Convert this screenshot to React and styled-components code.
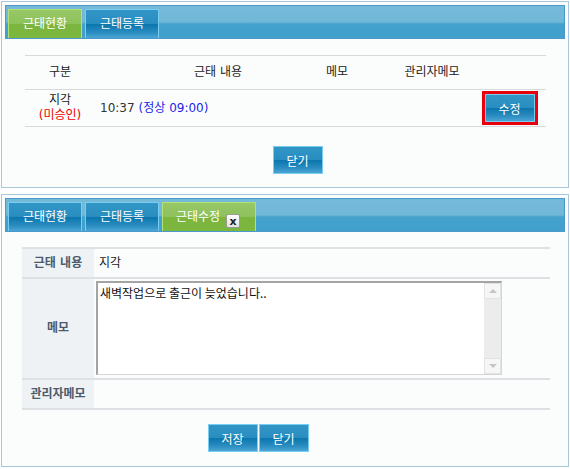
import React from 'react';
import styled, { createGlobalStyle, css } from 'styled-components';

const GlobalStyle = createGlobalStyle`
  body {
    margin: 0;
    background: #fff;
    font-family: "DejaVu Sans", "Noto Sans CJK KR", sans-serif;
    font-size: 12px;
    line-height: 15px;
    color: #222;
  }
`;

const blueGloss = css`
  border: 1px solid #78cdf0;
  background: linear-gradient(180deg, #3196c6 0%, #2a8dc0 48%, #0b77ae 52%, #2a8cc0 80%, #4aa5d3 100%);
`;

const greenGloss = css`
  border: 1px solid #b4e078;
  background: linear-gradient(180deg, #96c866 0%, #8ec25c 48%, #7bb53e 52%, #7cb73f 100%);
`;

const App = () => {
  return (
    <>
      <GlobalStyle />
      <Page>
        <Panel>
          <TabBar>
            <Tab $active>근태현황</Tab>
            <Tab>근태등록</Tab>
          </TabBar>
          <Body $pad="16px 19px 10px 20px">
            <ListTable>
              <HeadRow>
                <HeadCell>구분</HeadCell>
                <HeadCell $shift={58}>근태 내용</HeadCell>
                <HeadCell>메모</HeadCell>
                <HeadCell>관리자메모</HeadCell>
                <HeadCell />
              </HeadRow>
              <DataRow>
                <KindCell>
                  <span>지각</span>
                  <Pending>(미승인)</Pending>
                </KindCell>
                <TimeCell>
                  10:37 <Normal>(정상 09:00)</Normal>
                </TimeCell>
                <div />
                <div />
                <ActionCell>
                  <Highlight>
                    <BlueButton>수정</BlueButton>
                  </Highlight>
                </ActionCell>
              </DataRow>
            </ListTable>
            <ButtonRow $left={24} $top={19}>
              <BlueButton>닫기</BlueButton>
            </ButtonRow>
          </Body>
        </Panel>

        <Panel>
          <TabBar>
            <Tab>근태현황</Tab>
            <Tab>근태등록</Tab>
            <Tab $active $wide>
              근태수정
              <CloseBox>x</CloseBox>
            </Tab>
          </TabBar>
          <Body $pad="15px 15px 11px 17px">
            <FormTable>
              <FormRow $height={28}>
                <Label>근태 내용</Label>
                <Value>지각</Value>
              </FormRow>
              <FormRow $height={99}>
                <Label>메모</Label>
                <MemoWrap>
                  <Memo defaultValue="새벽작업으로 출근이 늦었습니다.." />
                  <ScrollTrack>
                    <ScrollBtn $dir="up" />
                    <ScrollBtn $dir="down" />
                  </ScrollTrack>
                </MemoWrap>
              </FormRow>
              <FormRow $height={28}>
                <Label>관리자메모</Label>
                <Value />
              </FormRow>
            </FormTable>
            <ButtonRow $right={56} $top={14}>
              <BlueButton>저장</BlueButton>
              <BlueButton>닫기</BlueButton>
            </ButtonRow>
          </Body>
        </Panel>
      </Page>
    </>
  );
};

export default App;

const Page = styled.div`
  display: flex;
  flex-direction: column;
  gap: 6px;
  padding: 1px 0 0 1px;
`;

const Panel = styled.section`
  width: 568px;
  box-sizing: border-box;
  border: 1px solid #a9c7db;
  background: #fbfdfd;
  padding: 3px;
`;

const TabBar = styled.div`
  height: 34px;
  box-sizing: border-box;
  border: 1px solid #4b99cc;
  background: linear-gradient(180deg, #75bad9 0%, #71b7d8 50%, #44a2cd 56%, #41a0cc 100%);
  display: flex;
  align-items: flex-end;
  gap: 3px;
  padding: 3px 0 0 2px;
`;

const Tab = styled.div`
  width: ${p => (p.$wide ? 94 : 74)}px;
  height: 29px;
  box-sizing: border-box;
  display: flex;
  align-items: center;
  justify-content: ${p => (p.$wide ? 'flex-start' : 'center')};
  padding-left: ${p => (p.$wide ? 13 : 0)}px;
  color: #fff;
  font-size: 12px;
  ${p => (p.$active ? greenGloss : blueGloss)}
  border-bottom: none;
`;

const CloseBox = styled.span`
  width: 14px;
  height: 14px;
  box-sizing: border-box;
  margin: 8px 0 0 6px;
  border: 1px solid #9a9a9a;
  border-radius: 2px;
  background: linear-gradient(180deg, #ffffff 0%, #e4e4e4 100%);
  color: #222;
  font-size: 11px;
  font-weight: bold;
  line-height: 11px;
  display: flex;
  align-items: center;
  justify-content: center;
`;

const Body = styled.div`
  padding: ${p => p.$pad};
`;

const ListTable = styled.div`
  border-top: 1px solid #d7dadd;
`;

const gridCols = css`
  display: grid;
  grid-template-columns: 70px 188px 108px 82px 1fr;
  border-bottom: 1px solid #d7dadd;
`;

const HeadRow = styled.div`
  ${gridCols}
  height: 34px;
  box-sizing: border-box;
`;

const HeadCell = styled.div`
  display: flex;
  align-items: center;
  justify-content: center;
  padding-left: ${p => p.$shift || 0}px;
  color: #222;
`;

const DataRow = styled.div`
  ${gridCols}
  height: 37px;
  box-sizing: border-box;
`;

const KindCell = styled.div`
  display: flex;
  flex-direction: column;
  align-items: center;
  justify-content: center;
  line-height: 15px;
`;

const Pending = styled.span`
  color: #f00000;
`;

const TimeCell = styled.div`
  display: flex;
  align-items: center;
  gap: 4px;
  padding-left: 5px;
  color: #333;
`;

const Normal = styled.span`
  color: #1d1de8;
`;

const ActionCell = styled.div`
  display: flex;
  align-items: center;
  justify-content: center;
`;

const Highlight = styled.div`
  display: flex;
  border: 3px solid #e8000b;
`;

const BlueButton = styled.button`
  width: 50px;
  height: 28px;
  box-sizing: border-box;
  padding: 0;
  ${blueGloss}
  color: #fff;
  font-family: "DejaVu Sans", "Noto Sans CJK KR", sans-serif;
  font-size: 12px;
  cursor: pointer;
`;

const ButtonRow = styled.div`
  display: flex;
  justify-content: center;
  gap: 1px;
  margin-top: ${p => p.$top}px;
  padding: 0 ${p => p.$right || 0}px 0 ${p => p.$left || 0}px;
`;

const FormTable = styled.div`
  border-top: 2px solid #dee1e4;
`;

const FormRow = styled.div`
  display: grid;
  grid-template-columns: 72px 1fr;
  height: ${p => p.$height + 2}px;
  box-sizing: border-box;
  border-bottom: 2px solid #dee1e4;
`;

const Label = styled.div`
  background: #eef2f5;
  display: flex;
  align-items: center;
  justify-content: center;
  font-weight: bold;
  color: #4c5a6b;
`;

const Value = styled.div`
  display: flex;
  align-items: center;
  padding-left: 5px;
  color: #222;
`;

const MemoWrap = styled.div`
  position: relative;
  width: 406px;
  height: 94px;
  margin: 2px 0 0 2px;
`;

const Memo = styled.textarea`
  width: 100%;
  height: 100%;
  box-sizing: border-box;
  margin: 0;
  padding: 2px 20px 2px 2px;
  border-style: solid;
  border-width: 2px 1px 1px 2px;
  border-color: #a4a4a4 #d6d6d6 #d6d6d6 #a4a4a4;
  background: #fff;
  resize: none;
  overflow: hidden;
  outline: none;
  font-family: "Noto Sans CJK KR", sans-serif;
  font-size: 12px;
  line-height: 15px;
  color: #111;
`;

const ScrollTrack = styled.div`
  position: absolute;
  top: 2px;
  right: 1px;
  bottom: 1px;
  width: 17px;
  background: #ececec;
  display: flex;
  flex-direction: column;
  justify-content: space-between;
`;

const ScrollBtn = styled.div`
  height: 16px;
  box-sizing: border-box;
  border: 1px solid #e2e2e2;
  background: #f6f6f6;
  display: flex;
  align-items: center;
  justify-content: center;
  &::after {
    content: '';
    width: 0;
    height: 0;
    border-left: 4px solid transparent;
    border-right: 4px solid transparent;
    ${p =>
      p.$dir === 'up'
        ? 'border-bottom: 4px solid #c6c6c6;'
        : 'border-top: 4px solid #c6c6c6;'}
  }
`;
